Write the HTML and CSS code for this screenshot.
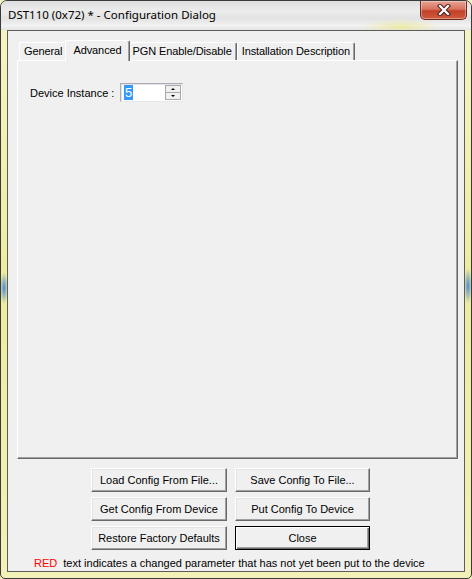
FILE: index.html
```html
<!DOCTYPE html>
<html lang="en">
<head>
    <meta charset="UTF-8">
    <title>DST110 (0x72) * - Configuration Dialog</title>
    <link rel="stylesheet" href="styles.css">
</head>
<body>
    <div class="window">
        <div class="titlebar">
            <span class="title">DST110 (0x72) * - Configuration Dialog</span>
            <button class="close-btn" title="Close">
                <svg width="14" height="12" viewBox="0 0 14 12">
                    <path d="M3 2 L11 10 M11 2 L3 10" stroke="#4a2020" stroke-width="4.2" stroke-linecap="square"/>
                    <path d="M3 2 L11 10 M11 2 L3 10" stroke="#fff" stroke-width="2.2" stroke-linecap="square"/>
                </svg>
            </button>
        </div>

        <div class="client">
            <div class="tab-area">
                <div class="tabs">
                    <div class="tab">General</div>
                    <div class="tab active">Advanced</div>
                    <div class="tab">PGN Enable/Disable</div>
                    <div class="tab">Installation Description</div>
                </div>
                <div class="tab-panel">
                    <div class="field">
                        <label>Device Instance :</label>
                        <div class="spin">
                            <span class="spin-value"><span class="selected">5</span></span>
                            <div class="spin-btns">
                                <span class="spin-up"></span>
                                <span class="spin-down"></span>
                            </div>
                        </div>
                    </div>
                </div>
            </div>

            <div class="buttons">
                <button class="btn">Load Config From File...</button>
                <button class="btn">Save Config To File...</button>
                <button class="btn">Get Config From Device</button>
                <button class="btn">Put Config To Device</button>
                <button class="btn">Restore Factory Defaults</button>
                <button class="btn default">Close</button>
            </div>

            <p class="note"><span class="red">RED</span> text indicates a changed parameter that has not yet been put to the device</p>
        </div>
    </div>
</body>
</html>
```
FILE: styles.css
```css
:root {
    --face: #f0f0f0;
    --light: #ffffff;
    --shadow: #a0a0a0;
    --dark-shadow: #696969;
}
* {
    box-sizing: border-box;
}
body {
    margin: 0;
    font-family: "Liberation Sans", Arial, sans-serif;
    font-size: 11px;
    color: #000;
    background: #f3f1c0;
}

/* Aero frame */
.window {
    width: 472px;
    height: 579px;
    border: 1px solid #3a3a3a;
    border-radius: 7px 7px 5px 5px;
    padding: 0 6px 6px 6px;
    display: flex;
    flex-direction: column;
    overflow: hidden;
    background:
        radial-gradient(ellipse 4px 16px at 3px 287px, #4d8bd2 0%, rgba(77,139,210,0) 100%),
        radial-gradient(ellipse 4px 18px at 467px 285px, #4d8bd2 0%, rgba(77,139,210,0) 100%),
        linear-gradient(to bottom, #f6f4c6 0%, #efec9e 50%, #f3f1b8 100%);
}
.titlebar {
    height: 29px;
    margin: 0 -6px;
    padding-left: 7px;
    display: flex;
    align-items: flex-start;
    background:
        radial-gradient(ellipse 40px 8px at 400px 26px, rgba(236,232,150,0.8), rgba(236,232,150,0)),
        linear-gradient(to bottom, #dedede 0%, #ececec 35%, #e2e2e2 60%, #f2f2f2 85%, #e4e4e4 100%);
}
.title {
    font-family: "Noto Sans", "Open Sans", sans-serif;
    font-size: 11.5px;
    line-height: 16px;
    padding-top: 6px;
    color: #000;
}
.close-btn {
    margin-left: auto;
    margin-right: 4px;
    width: 47px;
    height: 19px;
    padding: 0;
    border: 1px solid #6e2a1e;
    border-top: none;
    border-radius: 0 0 5px 5px;
    background: linear-gradient(to bottom, #e8a496 0%, #d9735f 45%, #c1412a 55%, #d05a3c 100%);
    box-shadow: inset 0 0 0 1px rgba(255,255,255,0.35);
    display: flex;
    align-items: center;
    justify-content: center;
}

/* client area */
.client {
    flex: 1;
    background: var(--face);
    border: 1px solid #5c5c5c;
    display: flex;
    flex-direction: column;
}
.tab-area {
    margin: 9px 6px 0 9px;
}
.tabs {
    height: 21px;
    padding-left: 2px;
    display: flex;
    align-items: flex-end;
}
.tab {
    height: 18px;
    margin-bottom: 1px;
    padding: 0 4px;
    line-height: 17px;
    letter-spacing: -0.1px;
    background: var(--face);
    border-top: 1px solid var(--light);
    border-left: 1px solid var(--light);
    border-right: 1px solid var(--dark-shadow);
    border-radius: 2px 2px 0 0;
    box-shadow: inset -1px 0 0 var(--shadow);
    white-space: nowrap;
}
.tab.active {
    height: 21px;
    margin: 0 -2px;
    padding: 0 7px;
    line-height: 18px;
    position: relative;
    z-index: 1;
}
.tab-panel {
    height: 399px;
    margin-top: -1px;
    padding: 22px 12px;
    border-top: 1px solid var(--light);
    border-left: 1px solid var(--light);
    border-right: 1px solid var(--dark-shadow);
    border-bottom: 1px solid var(--dark-shadow);
    box-shadow: inset -1px -1px 0 var(--shadow);
}
.field {
    display: flex;
    align-items: center;
}
.field label {
    width: 90px;
}
.spin {
    width: 63px;
    height: 19px;
    display: flex;
    background: #fff;
    border: 1px solid #abadb3;
    border-right-color: #e3e9ef;
    border-bottom-color: #e3e9ef;
    box-shadow: inset 1px 1px 0 #e2e3ea;
}
.spin-value {
    flex: 1;
    padding: 2px 0 0 3px;
    font-size: 13px;
    line-height: 14px;
}
.spin-value .selected {
    background: #3399ff;
    color: #fff;
    padding: 0 1px;
}
.spin-btns {
    width: 17px;
    display: flex;
    flex-direction: column;
    padding: 1px 1px 1px 0;
}
.spin-btns span {
    flex: 1;
    background: var(--face);
    border: 1px solid #a9a9a9;
    display: flex;
    align-items: center;
    justify-content: center;
}
.spin-btns span + span {
    border-top: none;
}
.spin-up::after {
    content: "";
    border: 2px solid transparent;
    border-bottom: 2px solid #000;
    border-top: none;
}
.spin-down::after {
    content: "";
    border: 2px solid transparent;
    border-top: 2px solid #000;
    border-bottom: none;
}

/* command buttons */
.buttons {
    display: grid;
    grid-template-columns: 136px 135px;
    grid-auto-rows: 24px;
    gap: 5px 8px;
    margin: 9px 0 0 83px;
}
.btn {
    font-family: inherit;
    font-size: 11px;
    color: #000;
    padding: 0;
    background: var(--face);
    border: 1px solid;
    border-color: var(--light) var(--dark-shadow) var(--dark-shadow) var(--light);
    box-shadow: inset -1px -1px 0 var(--shadow), inset 1px 1px 0 #e3e3e3;
}
.btn.default {
    border: 1px solid #000;
    box-shadow: inset 1px 1px 0 var(--light), inset -1px -1px 0 var(--dark-shadow), inset -2px -2px 0 var(--shadow);
}
.note {
    margin: 6px 0 0;
    padding-left: 26px;
    line-height: 14px;
}
.red {
    color: #ff0000;
    margin-right: 3px;
}
```
